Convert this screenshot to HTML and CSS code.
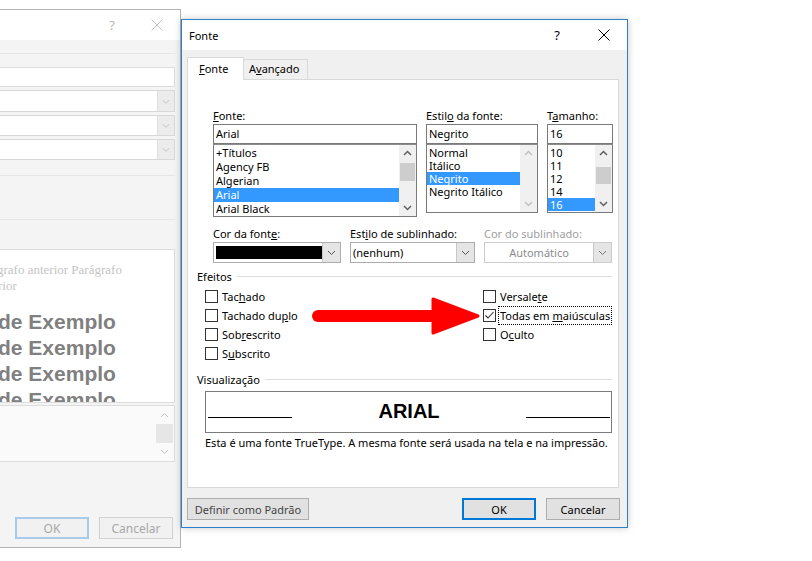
FILE: index.html
```html
<!DOCTYPE html>
<html lang="pt">
<head>
<meta charset="utf-8">
<title>Fonte</title>
<link rel="stylesheet" href="styles.css">
</head>
<body>
<div class="desk">

  <section class="win back">
    <header class="back-title">
      <span class="q">?</span>
      <svg class="x" width="12" height="12" viewBox="0 0 12 12"><path d="M0.5 0.5L11.5 11.5M11.5 0.5L0.5 11.5"/></svg>
    </header>
    <div class="back-body">
      <div class="b-rule r1"></div>
      <div class="b-input"></div>
      <div class="b-select s1"><span class="b-arrow"><svg width="17" height="20" viewBox="0 0 17 20"><polyline points="5,9 8.5,12.5 12,9"/></svg></span></div>
      <div class="b-select"><span class="b-arrow"><svg width="17" height="19" viewBox="0 0 17 19"><polyline points="5,8 8.5,11.5 12,8"/></svg></span></div>
      <div class="b-select"><span class="b-arrow"><svg width="17" height="19" viewBox="0 0 17 19"><polyline points="5,8 8.5,11.5 12,8"/></svg></span></div>
      <div class="b-rule r2"></div>
      <div class="b-rule r3"></div>
      <div class="b-preview">
        <p class="pv-prev first">grafo anterior Parágrafo</p>
        <p class="pv-prev">rior</p>
        <p class="pv-ex first">de Exemplo</p>
        <p class="pv-ex">de Exemplo</p>
        <p class="pv-ex">de Exemplo</p>
        <p class="pv-ex">de Exemplo</p>
      </div>
      <div class="b-desc">
        <div class="b-sb">
          <span class="b-sb-btn"><svg width="17" height="18" viewBox="0 0 17 18"><polyline points="5,11 8.5,7.5 12,11"/></svg></span>
          <span class="b-sb-thumb"></span>
          <span class="b-sb-btn"><svg width="17" height="18" viewBox="0 0 17 18"><polyline points="5,7 8.5,10.5 12,7"/></svg></span>
        </div>
      </div>
      <div class="b-buttons">
        <button class="b-btn ok">OK</button>
        <button class="b-btn">Cancelar</button>
      </div>
    </div>
  </section>

  <section class="win fdlg">
    <header class="f-title">
      <span class="t">Fonte</span>
      <span class="q">?</span>
      <svg class="x" width="12" height="12" viewBox="0 0 12 12"><path d="M0.5 0.5L11.5 11.5M11.5 0.5L0.5 11.5"/></svg>
    </header>
    <div class="f-body">
      <div class="tabs">
        <div class="tab active"><u>F</u>onte</div>
        <div class="tab">A<u>v</u>ançado</div>
      </div>
      <div class="panel">
        <div class="row1">
          <div class="col c-font">
            <label class="lbl"><u>F</u>onte:</label>
            <div class="inp">Arial</div>
            <div class="lst l-font">
              <div class="items">
                <div class="it it14">+Títulos</div>
                <div class="it it14">Agency FB</div>
                <div class="it it14">Algerian</div>
                <div class="it it14 sel">Arial</div>
                <div class="it it14">Arial Black</div>
              </div>
              <div class="sb">
                <span class="sb-btn"><svg width="17" height="17" viewBox="0 0 17 17"><polyline points="5,10 8.5,6.5 12,10"/></svg></span>
                <span class="sb-track"><span class="thumb t-font"></span></span>
                <span class="sb-btn"><svg width="17" height="17" viewBox="0 0 17 17"><polyline points="5,7 8.5,10.5 12,7"/></svg></span>
              </div>
            </div>
          </div>
          <div class="col c-style">
            <label class="lbl">Estil<u>o</u> da fonte:</label>
            <div class="inp">Negrito</div>
            <div class="lst l-small">
              <div class="items">
                <div class="it">Normal</div>
                <div class="it">Itálico</div>
                <div class="it sel">Negrito</div>
                <div class="it">Negrito Itálico</div>
              </div>
              <div class="sb disabled">
                <span class="sb-btn"><svg width="17" height="17" viewBox="0 0 17 17"><polyline points="5,10 8.5,6.5 12,10"/></svg></span>
                <span class="sb-track"></span>
                <span class="sb-btn"><svg width="17" height="17" viewBox="0 0 17 17"><polyline points="5,7 8.5,10.5 12,7"/></svg></span>
              </div>
            </div>
          </div>
          <div class="col c-size">
            <label class="lbl">T<u>a</u>manho:</label>
            <div class="inp">16</div>
            <div class="lst l-small">
              <div class="items">
                <div class="it">10</div>
                <div class="it">11</div>
                <div class="it">12</div>
                <div class="it">14</div>
                <div class="it sel">16</div>
              </div>
              <div class="sb">
                <span class="sb-btn"><svg width="17" height="17" viewBox="0 0 17 17"><polyline points="5,10 8.5,6.5 12,10"/></svg></span>
                <span class="sb-track"><span class="thumb t-size"></span></span>
                <span class="sb-btn"><svg width="17" height="17" viewBox="0 0 17 17"><polyline points="5,7 8.5,10.5 12,7"/></svg></span>
              </div>
            </div>
          </div>
        </div>

        <div class="row2">
          <div class="col c-color">
            <label class="lbl">Cor da font<u>e</u>:</label>
            <div class="cmb">
              <span class="cmb-val"><span class="swatch"></span></span>
              <span class="cmb-btn"><svg width="17" height="19" viewBox="0 0 17 19"><polyline points="5,8 8.5,11.5 12,8"/></svg></span>
            </div>
          </div>
          <div class="col c-under">
            <label class="lbl">Est<u>i</u>lo de sublinhado:</label>
            <div class="cmb">
              <span class="cmb-val txt">(nenhum)</span>
              <span class="cmb-btn"><svg width="17" height="19" viewBox="0 0 17 19"><polyline points="5,8 8.5,11.5 12,8"/></svg></span>
            </div>
          </div>
          <div class="col c-ucolor">
            <label class="lbl dis">Cor do sublinhado:</label>
            <div class="cmb dis">
              <span class="cmb-val center">Automático</span>
              <span class="cmb-btn"><svg width="17" height="19" viewBox="0 0 17 19"><polyline points="5,8 8.5,11.5 12,8"/></svg></span>
            </div>
          </div>
        </div>

        <div class="grp g-eff">
          <div class="grp-h">Efeitos</div>
          <div class="checks">
            <div class="ccol left">
              <div class="chk"><span class="box"></span><span class="cl">Tac<u>h</u>ado</span></div>
              <div class="chk"><span class="box"></span><span class="cl">Tachado du<u>p</u>lo</span></div>
              <div class="chk"><span class="box"></span><span class="cl">Sob<u>r</u>escrito</span></div>
              <div class="chk"><span class="box"></span><span class="cl">S<u>u</u>bscrito</span></div>
            </div>
            <div class="ccol">
              <div class="chk"><span class="box"></span><span class="cl">Versale<u>t</u>e</span></div>
              <div class="chk"><span class="box"><svg width="11" height="11" viewBox="0 0 11 11"><polyline points="1.5,5.5 4,8 9.5,2"/></svg></span><span class="cl focus">Todas em <u>m</u>aiúsculas</span></div>
              <div class="chk"><span class="box"></span><span class="cl">O<u>c</u>ulto</span></div>
            </div>
          </div>
        </div>

        <div class="grp g-prev">
          <div class="grp-h">Visualização</div>
          <div class="pv">
            <span class="pv-line"></span>
            <span class="pv-text">ARIAL</span>
            <span class="pv-line"></span>
          </div>
          <p class="pv-note">Esta é uma fonte TrueType. A mesma fonte será usada na tela e na impressão.</p>
        </div>
      </div>

      <div class="f-buttons">
        <button class="btn b-def">Definir como Padrão</button>
        <button class="btn ok">OK</button>
        <button class="btn">Cancelar</button>
      </div>
    </div>
  </section>

  <svg class="arrow" width="185" height="50" viewBox="0 0 185 50">
    <line x1="18" y1="26" x2="140" y2="26" class="shaft"/>
    <polygon points="133,9 178,26 133,43" class="head"/>
  </svg>
</div>
</body>
</html>
```

FILE: styles.css
```css
* { box-sizing: border-box; }
html, body { margin: 0; padding: 0; }
body {
  width: 812px;
  height: 561px;
  overflow: hidden;
  background: #fff;
  font-family: "Segoe UI", "Noto Sans", "Liberation Sans", sans-serif;
  font-size: 11px;
  color: #000;
}
p { margin: 0; }
u { text-decoration: underline; text-underline-offset: 1px; }
button { font: inherit; }

.desk { position: relative; width: 812px; height: 561px; }
.win { position: absolute; }

/* ---------- background dialog ---------- */
.back {
  left: -20px;
  top: 9px;
  width: 201px;
  height: 539px;
  border: 1px solid #b3b3b3;
  background: #f4f4f4;
  display: flex;
  flex-direction: column;
}
.back-title {
  height: 30px;
  background: #fff;
  display: flex;
  align-items: center;
  justify-content: flex-end;
  padding-right: 17px;
  color: #b9b9b9;
}
.back-title .q { font-size: 13px; margin-right: 36px; }
.back-title .x path { stroke: #c2c2c2; stroke-width: 1; fill: none; }
.back-body {
  padding-right: 5px;
  display: flex;
  flex-direction: column;
}
.b-rule { height: 1px; background: #e6e6e6; }
.b-rule.r1 { margin-top: 13px; }
.b-rule.r2 { margin-top: 15px; }
.b-rule.r3 { margin-top: 43px; }
.b-input {
  margin-top: 13px;
  height: 20px;
  background: #fff;
  border: 1px solid #dcdcdc;
}
.b-select {
  margin-top: 3px;
  height: 21px;
  background: #fff;
  border: 1px solid #d8d8d8;
  display: flex;
  justify-content: flex-end;
}
.b-select.s1 { height: 22px; }
.b-arrow {
  width: 17px;
  background: #ececec;
  border-left: 1px solid #dedede;
  display: flex;
}
.b-arrow polyline, .b-sb polyline { fill: none; stroke: #c0c0c0; stroke-width: 1; }
.b-preview {
  margin-top: 29px;
  height: 154px;
  background: #fff;
  border: 1px solid #dcdcdc;
  overflow: hidden;
  padding: 12px 0 0 16px;
  white-space: nowrap;
}
.pv-prev {
  font-family: "Liberation Serif", serif;
  font-size: 13px;
  line-height: 16px;
  color: #c4c4c4;
}
.pv-prev.first { margin-left: -1px; }
.pv-ex {
  font-family: "Liberation Sans", Arial, sans-serif;
  font-weight: bold;
  font-size: 21px;
  line-height: 26px;
  color: #808080;
}
.pv-ex.first { margin-top: 15px; }
.b-desc {
  margin-top: 2px;
  height: 57px;
  background: #fafafa;
  border: 1px solid #dcdcdc;
  display: flex;
  justify-content: flex-end;
  padding-right: 1px;
}
.b-sb { width: 17px; display: flex; flex-direction: column; }
.b-sb-btn { height: 18px; display: flex; }
.b-sb-thumb { height: 19px; background: #e6e6e6; }
.b-buttons {
  margin-top: 55px;
  display: flex;
  justify-content: flex-end;
  gap: 10px;
  padding-right: 2px;
}
.b-btn {
  width: 74px;
  height: 22px;
  padding: 0;
  background: #f1f1f1;
  border: 1px solid #d2d2d2;
  color: #a8a8a8;
  font-size: 12px;
}
.b-btn.ok { border: 2px solid #a9cbe9; }

/* ---------- Fonte dialog ---------- */
.fdlg {
  left: 181px;
  top: 19px;
  width: 447px;
  height: 509px;
  border: 1px solid #2f80cc;
  background: #f0f0f0;
  box-shadow: 0 0 7px rgba(0, 0, 0, 0.22);
}
.f-title {
  height: 30px;
  background: #fff;
  display: flex;
  align-items: center;
  padding: 0 17px 0 7px;
}
.f-title .t { flex: 1; }
.f-title .q { font-size: 13px; margin-right: 38px; }
.f-title .x path { stroke: #000; stroke-width: 1; fill: none; }

.f-body { padding: 7px 7px 0 5px; }
.tabs { display: flex; align-items: flex-end; height: 22px; }
.tab {
  height: 20px;
  width: 65px;
  margin-left: -1px;
  border: 1px solid #d9d9d9;
  border-bottom: none;
  background: #f0f0f0;
  padding-left: 5px;
  line-height: 18px;
}
.tab.active {
  margin-left: 0;
  width: 57px;
  height: 23px;
  margin-bottom: -1px;
  padding-left: 11px;
  line-height: 22px;
  background: #fff;
  position: relative;
  z-index: 1;
}
.panel {
  width: 432px;
  height: 409px;
  border: 1px solid #d9d9d9;
  background: #fff;
}

.lbl { display: block; line-height: 15px; height: 15px; white-space: nowrap; }
.lbl.dis { color: #a0a0a0; }

.row1 { margin: 28px 0 0 25px; display: flex; gap: 9px; align-items: flex-start; }
.c-font { width: 204px; }
.c-style { width: 112px; }
.c-size { width: 66px; }
.inp {
  margin-top: 1px;
  height: 20px;
  border: 1px solid #7a7a7a;
  background: #fff;
  padding-left: 2px;
  line-height: 18px;
}
.lst {
  height: 69px;
  border: 1px solid #7a7a7a;
  border-top-color: #8c8c8c;
  background: #fff;
  display: flex;
  overflow: hidden;
}
.lst.l-font { height: 73px; }
.items { flex: 1; padding-top: 1px; white-space: nowrap; }
.it { height: 13px; line-height: 13px; padding-left: 2px; }
.it.it14 { height: 14px; line-height: 14px; }
.it.sel { background: #3399ff; color: #fff; }
.sb { width: 17px; background: #f0f0f0; display: flex; flex-direction: column; }
.sb-btn { height: 17px; display: flex; }
.sb polyline { fill: none; stroke: #606060; stroke-width: 1.5; }
.sb.disabled polyline { stroke: #c2c2c2; }
.sb-track { flex: 1; display: flex; flex-direction: column; }
.thumb { background: #cdcdcd; margin: 0 1px; }
.thumb.t-font { margin-top: 1px; height: 18px; }
.thumb.t-size { margin-top: 5px; height: 17px; }

.row2 { margin: 9px 0 0 25px; display: flex; gap: 9px; }
.c-color { width: 128px; }
.c-under { width: 125px; }
.c-ucolor { width: 128px; }
.cmb {
  margin-top: 1px;
  height: 21px;
  border: 1px solid #adadad;
  background: #fff;
  display: flex;
}
.cmb.dis { border-color: #cccccc; }
.cmb-val { flex: 1; display: flex; line-height: 19px; }
.cmb-val.txt { padding-left: 2px; }
.cmb-val.center { justify-content: center; color: #8c8c8c; }
.swatch { flex: 1; margin: 3px 0 3px 2px; background: #000; }
.cmb-btn {
  width: 18px;
  background: #e5e5e5;
  border-left: 1px solid #c8c8c8;
  display: flex;
}
.cmb-btn polyline { fill: none; stroke: #555; stroke-width: 1; }
.cmb.dis .cmb-btn polyline { stroke: #777; }

.grp { margin: 0 6px 0 9px; }
.g-eff { margin-top: 6px; }
.g-prev { margin-top: 9px; }
.grp-h {
  display: flex;
  align-items: center;
  line-height: 15px;
  white-space: nowrap;
}
.grp-h::after {
  content: "";
  flex: 1;
  height: 1px;
  background: #dcdcdc;
  margin-left: 5px;
}
.checks { display: flex; margin-top: 3px; padding-left: 8px; }
.ccol { display: flex; flex-direction: column; flex-shrink: 0; }
.ccol.left { width: 278px; }
.chk { height: 19px; display: flex; align-items: center; gap: 2px; white-space: nowrap; }
.box {
  width: 13px;
  height: 13px;
  border: 1px solid #333;
  background: #fff;
  display: flex;
  flex-shrink: 0;
}
.box polyline { fill: none; stroke: #333; stroke-width: 1.1; }
.cl {
  border: 1px dotted transparent;
  padding: 1px;
  line-height: 15px;
}
.cl.focus { border-color: #000; }

.pv {
  margin: 4px 0 0 8px;
  width: 407px;
  height: 42px;
  border: 1px solid #7b7b7b;
  display: flex;
  align-items: baseline;
  justify-content: space-between;
  padding: 9px 1px 0 2px;
}
.pv-line { display: block; width: 84px; height: 1px; background: #000; }
.pv-text {
  font-family: "Liberation Sans", Arial, sans-serif;
  font-weight: bold;
  font-size: 20px;
  line-height: 20px;
}
.pv-note { margin: 2px 0 0 8px; line-height: 15px; white-space: nowrap; }

.f-buttons { display: flex; margin-top: 10px; }
.btn {
  width: 74px;
  height: 22px;
  padding: 0;
  border: 1px solid #adadad;
  background: #e1e1e1;
  color: #000;
}
.btn.b-def { width: 122px; color: #444; }
.btn.ok { margin-left: auto; margin-right: 10px; border: 2px solid #0078d7; }

/* ---------- annotation arrow ---------- */
.arrow { position: absolute; left: 300px; top: 290px; }
.arrow .shaft { stroke: #ff0000; stroke-width: 12; stroke-linecap: round; }
.arrow .head { fill: #ff0000; stroke: #ff0000; stroke-width: 3; stroke-linejoin: round; }
```
